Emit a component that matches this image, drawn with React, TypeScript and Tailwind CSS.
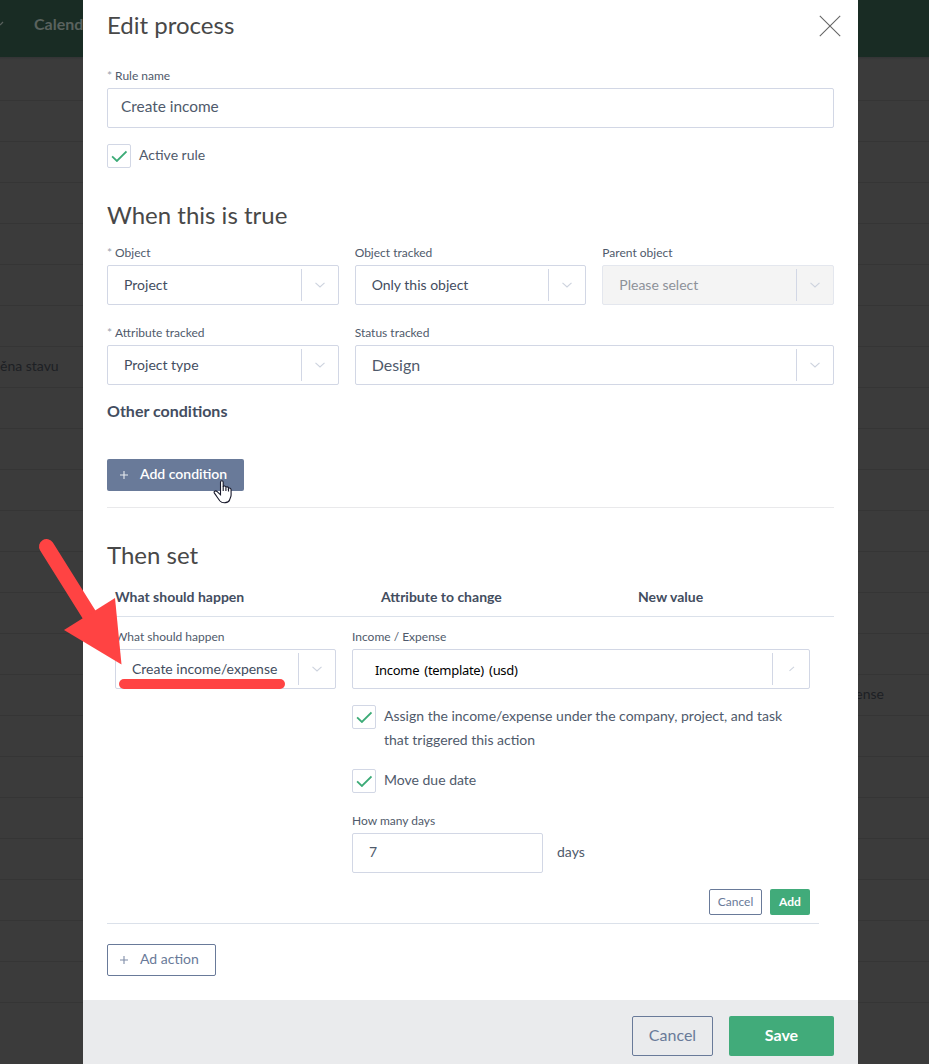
import React from "react";

const rows = Array.from({ length: 23 }, (_, i) => i);

function Chevron({ partial = false }: { partial?: boolean }) {
  return (
    <svg width="10" height="6" viewBox="0 0 10 6" fill="none" stroke="#cdd3de" strokeWidth="1.1">
      {partial ? <path d="M3.5 4.8 L8 0.8" /> : <path d="M0.5 0.8 L5 5 L9.5 0.8" />}
    </svg>
  );
}

function Label({ children, required = false }: { children: React.ReactNode; required?: boolean }) {
  return (
    <div className="mb-1 flex h-4 items-center whitespace-pre text-[12px] leading-4 text-[#4f5a6b]">
      {required && <span className="mr-[3px] text-[#9aa1ad]">*</span>}
      {children}
    </div>
  );
}

function Select({
  value,
  disabled = false,
  text = "pb-0.5 text-[14px] text-[#434d60]",
  partial = false,
}: {
  value: string;
  disabled?: boolean;
  text?: string;
  partial?: boolean;
}) {
  return (
    <div
      className={
        disabled
          ? "flex h-10 items-center rounded-[2px] border border-[#e4e7ee] bg-[#f4f4f4] pl-4"
          : "flex h-10 items-center rounded-[2px] border border-[#d2d7e5] bg-white pl-4"
      }
    >
      <span className={`flex-1 whitespace-nowrap ${text}`}>{value}</span>
      <span className="flex h-8 w-[37px] items-center justify-center border-l border-[#d2d7e5]">
        <Chevron partial={partial} />
      </span>
    </div>
  );
}

function Check({ children }: { children: React.ReactNode }) {
  return (
    <div className="flex gap-2">
      <span className="flex size-6 shrink-0 items-center justify-center rounded-[2px] border border-[#d2d7e5]">
        <svg width="16" height="12" viewBox="0 0 16 12" fill="none" stroke="#3cab77" strokeWidth="1.8">
          <path d="M1.1 6.4 L5.9 11 L15.5 1.5" />
        </svg>
      </span>
      <span className="-mt-px mb-px text-[14px] leading-6 text-[#4f5a6b]">{children}</span>
    </div>
  );
}

function Plus() {
  return (
    <svg width="8" height="8" viewBox="0 0 8 8" stroke="currentColor" strokeWidth="1.1" opacity="0.85">
      <path d="M4 0 V8 M0 4 H8" />
    </svg>
  );
}

export default function App() {
  return (
    <div className="relative h-[1064px] w-[929px] overflow-hidden bg-[#3b3b3b] font-['Lato',sans-serif]">
      <header className="flex h-[57px] items-center bg-[#192c24] pb-2.5 text-[#5a625e]">
        <svg width="4" height="6" viewBox="0 0 4 6" fill="none" stroke="currentColor" strokeWidth="1.2">
          <path d="M0 4 L3 1" />
        </svg>
        <span className="ml-[30px] text-[16px] font-bold">Calendar</span>
      </header>
      <div className="h-[3px] bg-gradient-to-b from-[#333435] to-[#3b3b3b]" />
      <div className="-mt-0.5">
        {rows.map((i) => (
          <div
            key={i}
            className="flex h-[41px] items-center border-b border-[#353535] pb-[3px] text-[14px] text-[#1d2024] first:h-[43px]"
          >
            {i === 7 && <span className="whitespace-nowrap">ěna stavu</span>}
            {i === 15 && (
              <span className="flex w-[884px] justify-end whitespace-nowrap">Create income/expense</span>
            )}
          </div>
        ))}
      </div>

      <div className="absolute inset-0 pl-[83px]">
        <section className="flex h-full w-[775px] flex-col bg-white">
          <div className="px-6">
            <div className="flex h-[52px] items-center justify-between">
              <h1 className="pb-0.5 text-[24px] text-[#484848]">Edit process</h1>
              <svg className="-mr-[7px]" width="22" height="22" viewBox="0 0 22 22" stroke="#666" strokeWidth="1.1">
                <path d="M0.8 0.8 L21.2 21.2 M21.2 0.8 L0.8 21.2" />
              </svg>
            </div>

            <div className="mt-4">
              <Label required>Rule name</Label>
              <div className="flex h-10 items-center rounded-[2px] border border-[#d2d7e5] px-[13px] pb-[3px] text-[15.4px] text-[#4f5a6b]">
                Create income
              </div>
            </div>
            <div className="mt-4">
              <Check>Active rule</Check>
            </div>

            <h2 className="mt-[31px] h-8 text-[24px] leading-8 text-[#484848]">When this is true</h2>
            <div className="mt-[14px] grid grid-cols-3 gap-x-4 gap-y-5">
              <div>
                <Label required>Object</Label>
                <Select value="Project" />
              </div>
              <div>
                <Label>Object tracked</Label>
                <Select value="Only this object" />
              </div>
              <div>
                <Label>Parent object</Label>
                <Select value="Please select" disabled text="pb-0.5 text-[14px] text-[#8d9199]" />
              </div>
              <div>
                <Label required>Attribute tracked</Label>
                <Select value="Project type" />
              </div>
              <div className="col-span-2">
                <Label>Status tracked</Label>
                <Select value="Design" text="text-[16px] text-[#4f5a6b]" />
              </div>
            </div>

            <h3 className="mt-4 h-5 text-[16px] font-bold leading-5 text-[#434d60]">Other conditions</h3>
            <button className="relative mt-[38px] flex h-8 w-[137px] items-center gap-3 rounded-[2px] bg-[#697a99] pl-[13px] text-[14px] font-semibold text-white">
              <Plus />
              <span className="pb-[3px]">Add condition</span>
              <svg className="absolute left-[106px] top-[20px]" width="20" height="25" viewBox="0 0 20 25">
                <path
                  d="M7.5 3.2 C7.5 1.2 10.2 1.2 10.2 3.2 V8 C10.5 6.5 13 6.8 12.9 8.5 C13.5 7.2 15.7 7.8 15.5 9.5 C16.4 8.5 18.2 9.2 18.1 11 V16 C18.1 18 17 19.2 16.6 21 C15.5 24 9.5 24.7 7 22 C5 19.5 3.5 17 1.4 14.2 C0.2 12.4 2.5 11.1 4.2 12.7 L7.5 15.8 Z"
                  fill="#fff"
                  stroke="#17182a"
                  strokeWidth="1.1"
                />
                <path d="M10.2 7.5 V12 M12.9 8.5 V12 M15.5 9.5 V12.5" fill="none" stroke="#17182a" strokeWidth="1.1" />
              </svg>
            </button>
            <div className="mt-4 h-px bg-[#e9e9eb]" />

            <h2 className="mt-[31px] h-8 text-[24px] leading-8 text-[#484848]">Then set</h2>
            <div className="mt-[7px] flex h-[39px] items-center border-b border-[#dbe1ea] pb-0.5 pl-2 text-[14px] font-bold text-[#434d60]">
              <span className="w-[266px]">What should happen</span>
              <span className="w-[257px]">Attribute to change</span>
              <span>New value</span>
            </div>
            <div className="mr-[15px] flex gap-4 border-b border-[#dbe1ea] pb-2 pl-2 pt-3">
              <div className="w-[221px]">
                <Label>What should happen</Label>
                <Select value="Create income/expense" />
              </div>
              <div className="w-[458px]">
                <Label>Income / Expense</Label>
                <Select
                  value="Income (template) (usd)"
                  text="pl-[6px] pt-[3px] font-['Noto_Sans',sans-serif] text-[13px] tracking-[-0.3px] [word-spacing:2px] text-black"
                  partial
                />
                <div className="mt-4">
                  <Check>
                    Assign the income/expense under the company, project, and task
                    <br />
                    that triggered this action
                  </Check>
                </div>
                <div className="mt-4">
                  <Check>Move due date</Check>
                </div>
                <div className="mt-5">
                  <Label>How many days</Label>
                  <div className="flex items-center gap-[14px] text-[14px] text-[#4f5a6b]">
                    <div className="flex h-10 w-[191px] items-center rounded-[2px] border border-[#d2d7e5] pb-[3px] pl-4">
                      7
                    </div>
                    <span className="pb-[3px]">days</span>
                  </div>
                </div>
                <div className="mt-4 flex justify-end gap-2 text-[12px]">
                  <button className="h-[26px] w-[53px] rounded-[2px] border border-[#697a99] text-[#697a99]">
                    Cancel
                  </button>
                  <button className="h-[26px] w-10 rounded-[2px] bg-[#41ab7a] font-bold text-white">Add</button>
                </div>
              </div>
            </div>
            <button className="mt-5 flex h-8 w-[109px] items-center gap-3 rounded-[2px] border border-[#697a99] pl-3 text-[14px] text-[#697a99]">
              <Plus />
              <span className="pb-[3px]">Ad action</span>
            </button>
          </div>

          <footer className="mt-6 flex h-16 items-start justify-end gap-4 bg-[#eaebed] px-6 pt-4 text-[16px]">
            <button className="h-10 w-[81px] rounded-[2px] border border-[#697a99] pb-0.5 text-[#697a99]">Cancel</button>
            <button className="h-10 w-[105px] rounded-[2px] bg-[#41ab7a] pb-0.5 font-bold text-white">Save</button>
          </footer>
        </section>
      </div>

      <svg className="absolute left-0 top-[520px]" width="310" height="190" viewBox="0 520 310 190">
        <path d="M46.5 546.5 L95 624" stroke="#ff4343" strokeWidth="15" strokeLinecap="round" />
        <path d="M115 598 L121.5 664.5 L64 630 Z" fill="#ff4343" />
        <path d="M124 684 H280" stroke="#ff4343" strokeWidth="10" strokeLinecap="round" />
      </svg>
    </div>
  );
}
